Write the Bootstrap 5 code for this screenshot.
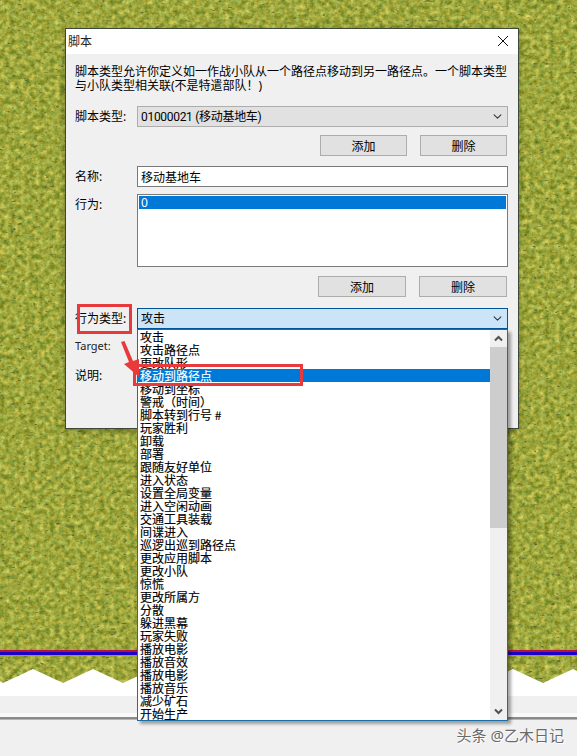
<!DOCTYPE html>
<html lang="zh-CN">
<head>
<meta charset="utf-8">
<title>脚本</title>
<link href="https://cdn.jsdelivr.net/npm/bootstrap@5.3.0/dist/css/bootstrap.min.css" rel="stylesheet">
<style>
html,body{margin:0;height:756px;overflow:hidden;background:#f0f0f0}
body{font:12px/14px "Noto Sans","Noto Sans CJK SC",sans-serif;color:#000}
.desk{width:577px;height:756px;overflow:hidden}
.grass-art{display:block;width:577px;height:696px}
.strip-a{height:17px;background:#f0f0f0}
.strip-b{height:4px;background:#fafafa}
.strip-c{height:2px;background:#8a8a8a;border-bottom:1px solid #b5b5b5;box-sizing:content-box}
.wmark{font-size:15px;line-height:18px;color:#6a6a6a;text-shadow:0 0 1px #fff,1px 1px 0 #fff;padding:6px 13px 0 0}
.win{left:65px;top:28px;width:454px;height:401px;background:#f0f0f0;border:1px solid #3d4a38;box-shadow:0 2px 6px rgba(0,0,0,.3)}
.win-title{height:25px;background:#fff;padding-left:2px}
.win-title span{line-height:24px;color:#222}
.win-x{width:10px;height:10px;margin-right:10px;margin-top:-1px}
.win-body{padding:11px 10px 0 9px}
.descr{height:28px;white-space:nowrap}
.lab{width:62px;flex:none;white-space:nowrap}
.fld{width:371px;flex:none}
.combo.form-select{height:21px;min-height:21px;font-size:12px;line-height:14px;padding:0 20px 0 3px;border:1px solid #adadad;border-radius:0;background-color:#e1e1e1;background-position:right 4px center;background-size:11px 9px;color:#000;box-shadow:none}
.combo-tight.form-select{font-family:Roboto,"Noto Sans CJK SC",sans-serif;letter-spacing:-.3px}
.combo-on.form-select{background-color:#cce4f7;border-color:#005499;padding-left:3px}
.fieldbox.form-control{height:21px;min-height:21px;font-size:12px;line-height:14px;padding:0 3px;border:1px solid #7a7a7a;border-radius:0;color:#000}
.wbtn.btn{height:21px;font-size:12px;line-height:14px;padding:2px 0 0;background:#e1e1e1;border:1px solid #adadad;border-radius:0;color:#000}
.w87{width:87px}.w88{width:88px}
.gap13{gap:13px}
.btnrow{margin-right:1px}
.m7{margin-top:7px}.m8{margin-top:8px}.m9{margin-top:9px}.m10{margin-top:10px}.m11{margin-top:11px}.m13{margin-top:13px}
.lh21{line-height:21px}
.listy.list-group{height:73px;border:1px solid #7a7a7a;border-radius:0;background:#fff;padding:1px}
.listy .list-group-item{padding:0 2px;height:13px;font-size:12px;line-height:13px;border:0;border-radius:0}
.listy .list-group-item.active{background:#0078d7}
.rowt{margin-top:10px;font-size:11px;color:#222}
.rowd{margin-top:16px}
.popup.dropdown-menu{display:flex;position:absolute;left:0;top:21px;width:371px;height:392px;margin:0;padding:0;min-width:0;border:1px solid #1a6fa8;border-radius:0;background:#fff;box-shadow:3px 3px 3px rgba(0,0,0,.35);overflow:hidden;font-family:"Noto Sans CJK SC",sans-serif}
.popup-list{width:352px;flex:none;margin:0;padding:0;list-style:none}
.popup .dropdown-item{height:13px;padding:0 2px;font-size:12px;line-height:13px;color:#000;white-space:nowrap;-webkit-text-stroke:.15px #000}
.popup .dropdown-item.active{background:#0078d7;color:#fff;-webkit-text-stroke:.15px #fff}
.sbar{width:17px;flex:none;background:#f0f0f0}
.sbtn{height:17px}
.sthumb{height:181px;background:#cdcdcd}
.sfill{flex:1}
.redbox{border:3px solid #e83a3c;z-index:1100}
.rb1{left:77px;top:304px;width:55px;height:30px}
.rb2{left:133px;top:364px;width:170px;height:22px}
.arrowart{left:115px;top:335px;width:30px;height:50px;z-index:1090}
</style>
</head>
<body>
<div class="desk position-relative d-flex flex-column">
  <svg class="grass-art" viewBox="0 0 577 696" aria-hidden="true">
    <defs>
      <filter id="turf" x="0" y="0" width="100%" height="100%" color-interpolation-filters="sRGB">
        <feTurbulence type="fractalNoise" baseFrequency=".2" numOctaves="4" seed="11" result="n1"/>
        <feColorMatrix in="n1" type="matrix" values=".5 .3 0 0 .22  .45 .1 0 0 .38  .4 0 0 0 .04  0 0 0 0 1" result="base"/>
        <feTurbulence type="fractalNoise" baseFrequency=".18 .35" numOctaves="2" seed="4" result="n2"/>
        <feColorMatrix in="n2" type="matrix" values="0 0 0 0 .36  0 0 0 0 .40  0 0 0 0 .20  5 0 0 0 -3.3" result="spots"/>
        <feMerge result="m"><feMergeNode in="base"/><feMergeNode in="spots"/></feMerge>
        <feGaussianBlur in="m" stdDeviation=".5"/>
      </filter>
      <clipPath id="edge"><polygon points="0,681 3,683 33,669 63,683 93,669 123,683 153,669 183,683 213,669 243,683 273,669 303,683 333,669 363,683 393,669 423,683 453,669 483,683 513,669 543,683 573,669 577,671 577,0 0,0"/></clipPath>
    </defs>
    <rect width="577" height="696" fill="#fff"/>
    <g clip-path="url(#edge)">
      <rect width="577" height="696" filter="url(#turf)"/>
      <rect y="650" width="577" height="2" fill="#b5133f"/>
      <rect y="652" width="577" height="3" fill="#1a00c8"/>
      <rect y="655" width="577" height="1" fill="#8f8fb0"/>
    </g>
  </svg>
  <div class="strip-a"></div>
  <div class="strip-b"></div>
  <div class="strip-c"></div>
  <div class="wmark text-end">头条 @乙木日记</div>

  <div class="win position-absolute d-flex flex-column">
    <div class="win-title d-flex align-items-center justify-content-between">
      <span>脚本</span>
      <svg class="win-x" viewBox="0 0 10 10" aria-hidden="true"><path d="M0 0L10 10M10 0L0 10" stroke="#111" stroke-width="1" fill="none"/></svg>
    </div>
    <div class="win-body">
      <div class="descr">脚本类型允许你定义如一作战小队从一个路径点移动到另一路径点。一个脚本类型<br>与小队类型相关联(不是特遣部队！)</div>
      <div class="d-flex m13">
        <div class="lab lh21">脚本类型:</div>
        <div class="fld"><select class="form-select combo combo-tight"><option>01000021 (移动基地车)</option></select></div>
      </div>
      <div class="d-flex justify-content-end gap13 m8 btnrow">
        <button class="btn wbtn w87" type="button">添加</button>
        <button class="btn wbtn w87" type="button">删除</button>
      </div>
      <div class="d-flex m10">
        <div class="lab lh21">名称:</div>
        <div class="fld"><input class="form-control fieldbox" type="text" value="移动基地车"></div>
      </div>
      <div class="d-flex m7">
        <div class="lab lh21">行为:</div>
        <div class="fld">
          <div class="list-group listy"><div class="list-group-item active">0</div></div>
        </div>
      </div>
      <div class="d-flex justify-content-end gap13 m9 btnrow">
        <button class="btn wbtn w88" type="button">添加</button>
        <button class="btn wbtn w88" type="button">删除</button>
      </div>
      <div class="d-flex m11">
        <div class="lab lh21">行为类型:</div>
        <div class="fld position-relative">
          <select class="form-select combo combo-on"><option>攻击</option></select>
          <div class="dropdown-menu show popup">
            <ul class="popup-list">
              <li class="dropdown-item">攻击</li>
              <li class="dropdown-item">攻击路径点</li>
              <li class="dropdown-item">更改队形</li>
              <li class="dropdown-item active">移动到路径点</li>
              <li class="dropdown-item">移动到坐标</li>
              <li class="dropdown-item">警戒（时间）</li>
              <li class="dropdown-item">脚本转到行号 #</li>
              <li class="dropdown-item">玩家胜利</li>
              <li class="dropdown-item">卸载</li>
              <li class="dropdown-item">部署</li>
              <li class="dropdown-item">跟随友好单位</li>
              <li class="dropdown-item">进入状态</li>
              <li class="dropdown-item">设置全局变量</li>
              <li class="dropdown-item">进入空闲动画</li>
              <li class="dropdown-item">交通工具装载</li>
              <li class="dropdown-item">间谍进入</li>
              <li class="dropdown-item">巡逻出巡到路径点</li>
              <li class="dropdown-item">更改应用脚本</li>
              <li class="dropdown-item">更改小队</li>
              <li class="dropdown-item">惊慌</li>
              <li class="dropdown-item">更改所属方</li>
              <li class="dropdown-item">分散</li>
              <li class="dropdown-item">躲进黑幕</li>
              <li class="dropdown-item">玩家失败</li>
              <li class="dropdown-item">播放电影</li>
              <li class="dropdown-item">播放音效</li>
              <li class="dropdown-item">播放电影</li>
              <li class="dropdown-item">播放音乐</li>
              <li class="dropdown-item">减少矿石</li>
              <li class="dropdown-item">开始生产</li>
            </ul>
            <div class="sbar d-flex flex-column">
              <div class="sbtn d-flex align-items-center justify-content-center">
                <svg width="9" height="7" viewBox="0 0 9 7" aria-hidden="true"><path d="M1 5.5L4.5 2L8 5.5" stroke="#505050" stroke-width="2" fill="none"/></svg>
              </div>
              <div class="sthumb"></div>
              <div class="sfill"></div>
              <div class="sbtn d-flex align-items-center justify-content-center">
                <svg width="9" height="7" viewBox="0 0 9 7" aria-hidden="true"><path d="M1 1.5L4.5 5L8 1.5" stroke="#505050" stroke-width="2" fill="none"/></svg>
              </div>
            </div>
          </div>
        </div>
      </div>
      <div class="rowt">Target:</div>
      <div class="rowd">说明:</div>
    </div>
  </div>

  <div class="redbox rb1 position-absolute"></div>
  <svg class="arrowart position-absolute" viewBox="0 0 30 50" aria-hidden="true">
    <polygon points="6,7 9.5,6 18,26 24,24 24,42 9,29 14,27" fill="#e83a3c"/>
  </svg>
  <div class="redbox rb2 position-absolute"></div>
</div>
</body>
</html>
